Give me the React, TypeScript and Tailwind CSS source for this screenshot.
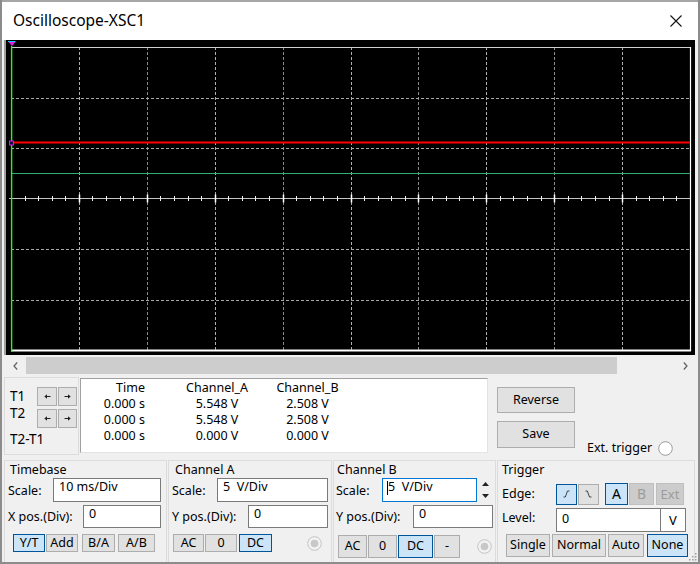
import React from "react";

type BP = { className?: string; children?: React.ReactNode; sel?: boolean; dis?: boolean };

function Btn({ className = "", children, sel, dis }: BP) {
  const tone = sel
    ? "bg-[#cce4f7] border-[#005499] text-black"
    : dis
    ? "bg-[#cccccc] border-[#bfbfbf] text-[#9c9c9c]"
    : "bg-[#e1e1e1] border-[#adadad] text-black";
  return (
    <div className={`flex shrink-0 items-center justify-center border text-[12.5px] leading-none ${tone} ${className}`}>
      {children}
    </div>
  );
}

function Field({ className = "", children, focus }: { className?: string; children?: React.ReactNode; focus?: boolean }) {
  const b = focus ? "border-[#0078d7]" : "border-[#7a7a7a]";
  return (
    <div className={`shrink-0 bg-white border ${b} pl-[5px] text-[12.5px] leading-[16px] whitespace-pre ${className}`}>
      {children}
    </div>
  );
}

function DimRadio({ className = "" }: { className?: string }) {
  return (
    <svg width="15" height="15" viewBox="0 0 15 15" className={`shrink-0 ${className}`}>
      <circle cx="7.5" cy="7.5" r="6.8" fill="#f2f2f2" stroke="#c4c4c4" strokeWidth="1" />
      <circle cx="7.5" cy="7.5" r="3.8" fill="#c8c8c8" />
    </svg>
  );
}

function Arrow({ dir }: { dir: "l" | "r" }) {
  return (
    <svg width="7" height="5" viewBox="0 0 7 5">
      {dir === "l" ? (
        <>
          <path d="M2 2.5 H6.5" stroke="#222" strokeWidth="1" />
          <path d="M0.3 2.5 L3 0.3 L3 4.7 Z" fill="#222" />
        </>
      ) : (
        <>
          <path d="M0.5 2.5 H5" stroke="#222" strokeWidth="1" />
          <path d="M6.7 2.5 L4 0.3 L4 4.7 Z" fill="#222" />
        </>
      )}
    </svg>
  );
}

function Scope() {
  const gx0 = 5;
  const gx1 = 684;
  const gy0 = 7;
  const gy1 = 310;
  const dx = (gx1 - gx0) / 10;
  const dy = (gy1 - gy0) / 6;
  const vlines = Array.from({ length: 9 }, (_, i) => Math.round(gx0 + (i + 1) * dx) + 0.5);
  const hlines = [1, 2, 4, 5].map((j) => Math.round(gy0 + j * dy) + 0.5);
  const ay = Math.floor(gy0 + 3 * dy) + 0.5;
  const ticks = Array.from({ length: 49 }, (_, k) => ({
    x: Math.round(gx0 + ((k + 1) * dx) / 5) + 0.5,
    major: (k + 1) % 5 === 0,
  }));
  return (
    <svg width="689" height="315" viewBox="0 0 689 315" className="block">
      {vlines.map((x, i) => (
        <line key={"v" + i} x1={x} y1={gy0} x2={x} y2={gy1} stroke={i % 2 === 0 ? "#b0b0b0" : "#8a8a8a"} strokeWidth="1" strokeDasharray="3 2" />
      ))}
      {hlines.map((y, i) => (
        <line key={"h" + i} x1={gx0} y1={y} x2={gx1} y2={y} stroke="#a8a8a8" strokeWidth="1" strokeDasharray="3 2" />
      ))}
      <line x1={3} y1={ay} x2={gx1} y2={ay} stroke="#c4c4c4" strokeWidth="1" />
      {ticks.map((t, i) =>
        t.major ? (
          <line key={"t" + i} x1={t.x} y1={ay - 4} x2={t.x} y2={ay + 4} stroke="#ffffff" strokeWidth="1.5" />
        ) : (
          <line key={"t" + i} x1={t.x} y1={ay - 2.5} x2={t.x} y2={ay + 2.5} stroke="#f4f4f4" strokeWidth="1" />
        )
      )}
      <line x1={gx0} y1={7.5} x2={gx1} y2={7.5} stroke="#cfcfcf" strokeWidth="1" />
      <line x1={684.5} y1={7} x2={684.5} y2={311} stroke="#ffffff" strokeWidth="1.2" />
      <line x1={gx0} y1={310.5} x2={685} y2={310.5} stroke="#ffffff" strokeWidth="2" />
      <line x1={gx0} y1={133.5} x2={gx1} y2={133.5} stroke="#30b06e" strokeWidth="1.2" />
      <line x1={gx0} y1={102.6} x2={gx1} y2={102.6} stroke="#ff0000" strokeWidth="2" />
      <line x1={5.6} y1={6} x2={5.6} y2={312} stroke="#2df02d" strokeWidth="1.4" />
      <rect x={3.5} y={101} width={4} height={4} fill="#10104a" stroke="#ff00ff" strokeWidth="1" />
      <line x1={2} y1={1.5} x2={9.5} y2={1.5} stroke="#10c8ff" strokeWidth="1" />
      <polygon points="2.5,2 9.5,2 6,6" fill="#e020e0" />
    </svg>
  );
}

export default function App() {
  return (
    <div className="w-[700px] h-[564px] bg-[#f0f0f0] font-['Noto_Sans',sans-serif] text-black overflow-hidden flex flex-col border-x-2 border-b-2 border-[#8c8c8c] relative">
      {/* Title bar */}
      <div className="h-[40px] shrink-0 bg-white border-t-2 border-[#a6a6a6] flex items-center justify-between pl-[11px] pr-[16px]">
        <span className="text-[15.5px] leading-none">Oscilloscope-XSC1</span>
        <svg width="12" height="12" viewBox="0 0 12 12">
          <path d="M0.5 0.5 L11.5 11.5 M11.5 0.5 L0.5 11.5" stroke="#111" strokeWidth="1.1" />
        </svg>
      </div>

      {/* Scope */}
      <div className="ml-[2px] w-[691px] h-[315px] shrink-0 bg-black border-l-2 border-[#a0a0a0]">
        <Scope />
      </div>

      {/* Scrollbar */}
      <div className="mt-[2px] ml-[2px] w-[692px] h-[17px] shrink-0 flex">
        <div className="w-[22px] flex items-center justify-center bg-[#f0f0f0]">
          <svg width="5" height="8" viewBox="0 0 5 8">
            <path d="M4.2 0.5 L1 4 L4.2 7.5" stroke="#606060" strokeWidth="1.2" fill="none" />
          </svg>
        </div>
        <div className="w-[591px] bg-[#cdcdcd]" />
        <div className="flex-1" />
        <div className="w-[22px] flex items-center justify-center">
          <svg width="5" height="8" viewBox="0 0 5 8">
            <path d="M0.8 0.5 L4 4 L0.8 7.5" stroke="#606060" strokeWidth="1.2" fill="none" />
          </svg>
        </div>
      </div>

      {/* Middle section */}
      <div className="h-[85px] shrink-0 flex">
        <div className="ml-[2px] mt-[3px] w-[75px] h-[78px] border border-[#dcdcdc] flex">
          <div className="w-[32px] pl-[5px] text-[13.5px] leading-[16px] flex flex-col">
            <div className="mt-[10px]">T1</div>
            <div className="mt-[1px]">T2</div>
            <div className="mt-[10px] whitespace-nowrap">T2-T1</div>
          </div>
          <div className="flex flex-col mt-[9px]">
            <div className="flex gap-[1px]">
              <Btn className="w-[20px] h-[19px]"><Arrow dir="l" /></Btn>
              <Btn className="w-[19px] h-[19px]"><Arrow dir="r" /></Btn>
            </div>
            <div className="flex gap-[1px] mt-[3px]">
              <Btn className="w-[20px] h-[19px]"><Arrow dir="l" /></Btn>
              <Btn className="w-[19px] h-[19px]"><Arrow dir="r" /></Btn>
            </div>
          </div>
        </div>

        <div className="ml-[1px] mt-[4px] w-[408px] h-[75px] bg-white border border-[#a0a0a0] border-r-[#e3e3e3] border-b-[#e3e3e3] pt-[1px] flex text-[12.5px] leading-[16px]">
          <div className="w-[64px] text-right flex flex-col">
            <div>Time</div>
            <div>0.000 s</div>
            <div>0.000 s</div>
            <div>0.000 s</div>
          </div>
          <div className="ml-[32px] w-[80px] text-center flex flex-col">
            <div>Channel_A</div>
            <div>5.548 V</div>
            <div>5.548 V</div>
            <div>0.000 V</div>
          </div>
          <div className="ml-[10px] w-[81px] text-center flex flex-col">
            <div>Channel_B</div>
            <div>2.508 V</div>
            <div>2.508 V</div>
            <div>0.000 V</div>
          </div>
        </div>

        <div className="ml-[9px] mt-[13px] w-[78px] flex flex-col">
          <Btn className="h-[26px] w-[78px]">Reverse</Btn>
          <Btn className="mt-[8px] h-[27px] w-[78px]">Save</Btn>
        </div>

        <div className="ml-[12px] mt-[66px] h-[16px] flex items-center">
          <span className="text-[12.5px] leading-[16px] whitespace-nowrap">Ext. trigger</span>
          <svg width="15" height="15" viewBox="0 0 15 15" className="ml-[6px] shrink-0">
            <circle cx="7.5" cy="7.5" r="6.8" fill="#ffffff" stroke="#9a9a9a" strokeWidth="1" />
          </svg>
        </div>
      </div>

      {/* Bottom groups */}
      <div className="flex-1 flex ml-[2px] mt-[1px] text-[12.5px]">
        {/* Timebase */}
        <div className="w-[163px] border-t border-l border-r border-[#dcdcdc] flex flex-col">
          <div className="pl-[5px] pt-[1px] leading-[15px]">Timebase</div>
          <div className="flex mt-[1px]">
            <div className="w-[48px] pl-[3px] mt-[5px] leading-[16px]">Scale:</div>
            <Field className="w-[108px] h-[24px]">10 ms/Div</Field>
          </div>
          <div className="flex mt-[3px]">
            <div className="w-[78px] pl-[3px] mt-[4px] leading-[16px] whitespace-nowrap">X pos.(Div):</div>
            <Field className="w-[78px] h-[23px]">0</Field>
          </div>
          <div className="flex mt-[6px] ml-[8px]">
            <Btn sel className="w-[32px] h-[18px]">Y/T</Btn>
            <Btn className="ml-[1px] w-[32px] h-[18px]">Add</Btn>
            <Btn className="ml-[4px] w-[33px] h-[18px]">B/A</Btn>
            <Btn className="ml-[3px] w-[37px] h-[18px]">A/B</Btn>
          </div>
        </div>

        {/* Channel A */}
        <div className="ml-[1px] w-[164px] border-t border-l border-r border-[#dcdcdc] flex flex-col">
          <div className="pl-[6px] pt-[1px] leading-[15px]">Channel A</div>
          <div className="flex mt-[1px]">
            <div className="w-[48px] pl-[3px] mt-[5px] leading-[16px]">Scale:</div>
            <Field className="w-[111px] h-[24px]">5  V/Div</Field>
          </div>
          <div className="flex mt-[3px]">
            <div className="w-[79px] pl-[3px] mt-[4px] leading-[16px] whitespace-nowrap">Y pos.(Div):</div>
            <Field className="w-[80px] h-[23px]">0</Field>
          </div>
          <div className="flex items-center mt-[6px] ml-[4px]">
            <Btn className="w-[31px] h-[18px]">AC</Btn>
            <Btn className="ml-[1px] w-[32px] h-[18px]">0</Btn>
            <Btn sel className="ml-[2px] w-[33px] h-[18px]">DC</Btn>
            <DimRadio className="ml-[35px]" />
          </div>
        </div>

        {/* Channel B */}
        <div className="ml-[1px] w-[163px] border-t border-l border-r border-[#dcdcdc] flex flex-col">
          <div className="pl-[3px] pt-[1px] leading-[15px]">Channel B</div>
          <div className="flex mt-[1px]">
            <div className="w-[48px] pl-[2px] mt-[5px] leading-[16px]">Scale:</div>
            <Field focus className="w-[95px] h-[24px] flex">
              <span className="inline-block w-[1px] h-[14px] bg-black mt-[2px] -ml-[1px]" />
              <span>5  V/Div</span>
            </Field>
            <div className="ml-[1px] w-[14px] h-[24px] flex flex-col bg-[#f0f0f0]">
              <div className="h-[12px] flex items-center justify-center">
                <svg width="7" height="4" viewBox="0 0 7 4"><path d="M0 4 L3.5 0 L7 4 Z" fill="#222" /></svg>
              </div>
              <div className="h-[12px] flex items-center justify-center">
                <svg width="7" height="4" viewBox="0 0 7 4"><path d="M0 0 L3.5 4 L7 0 Z" fill="#222" /></svg>
              </div>
            </div>
          </div>
          <div className="flex mt-[3px]">
            <div className="w-[79px] pl-[2px] mt-[4px] leading-[16px] whitespace-nowrap">Y pos.(Div):</div>
            <Field className="w-[80px] h-[23px]">0</Field>
          </div>
          <div className="flex items-center mt-[7px] ml-[4px]">
            <Btn className="w-[29px] h-[23px]">AC</Btn>
            <Btn className="ml-[1px] w-[29px] h-[23px]">0</Btn>
            <Btn sel className="ml-[1px] w-[35px] h-[23px]">DC</Btn>
            <Btn className="ml-[1px] w-[26px] h-[23px]">-</Btn>
            <DimRadio className="ml-[17px]" />
          </div>
        </div>

        {/* Trigger */}
        <div className="ml-[1px] w-[198px] border-t border-l border-r border-[#dcdcdc] flex flex-col">
          <div className="pl-[4px] pt-[1px] leading-[15px]">Trigger</div>
          <div className="flex items-center mt-[6px]">
            <div className="w-[58px] pl-[4px] leading-[16px]">Edge:</div>
            <Btn sel className="w-[21px] h-[21px]">
              <svg width="7" height="8" viewBox="0 0 7 8">
                <path d="M0.5 7 H2.3 L4.5 1 H6.5" stroke="#333" strokeWidth="0.9" fill="none" />
              </svg>
            </Btn>
            <Btn className="ml-[1px] w-[21px] h-[21px]">
              <svg width="7" height="8" viewBox="0 0 7 8">
                <path d="M0.5 1 H2.3 L4.5 7 H6.5" stroke="#333" strokeWidth="0.9" fill="none" />
              </svg>
            </Btn>
            <Btn sel className="ml-[6px] w-[23px] h-[22px] text-[14px]">A</Btn>
            <Btn dis className="ml-[1px] w-[25px] h-[22px] text-[14px]">B</Btn>
            <Btn dis className="ml-[2px] w-[28px] h-[22px] text-[13px]">Ext</Btn>
          </div>
          <div className="flex mt-[3px]">
            <div className="w-[58px] pl-[4px] mt-[2px] leading-[16px]">Level:</div>
            <Field className="w-[105px] h-[24px] pt-[2px]">0</Field>
            <div className="w-[25px] h-[24px] bg-white border border-l-0 border-[#7a7a7a] flex items-center justify-center text-[13px] leading-none">V</div>
          </div>
          <div className="flex mt-[2px] ml-[8px]">
            <Btn className="w-[44px] h-[23px]">Single</Btn>
            <Btn className="ml-[2px] w-[54px] h-[23px]">Normal</Btn>
            <Btn className="ml-[2px] w-[36px] h-[23px]">Auto</Btn>
            <Btn sel className="ml-[3px] w-[41px] h-[23px]">None</Btn>
          </div>
        </div>
      </div>

      {/* resize grip */}
      <svg width="8" height="8" viewBox="0 0 8 8" className="absolute right-[1px] bottom-[1px]">
        <rect x="6" y="0" width="1.5" height="1.5" fill="#a0a0a0" />
        <rect x="3" y="3" width="1.5" height="1.5" fill="#a0a0a0" />
        <rect x="6" y="3" width="1.5" height="1.5" fill="#a0a0a0" />
        <rect x="0" y="6" width="1.5" height="1.5" fill="#a0a0a0" />
        <rect x="3" y="6" width="1.5" height="1.5" fill="#a0a0a0" />
        <rect x="6" y="6" width="1.5" height="1.5" fill="#a0a0a0" />
      </svg>
    </div>
  );
}
